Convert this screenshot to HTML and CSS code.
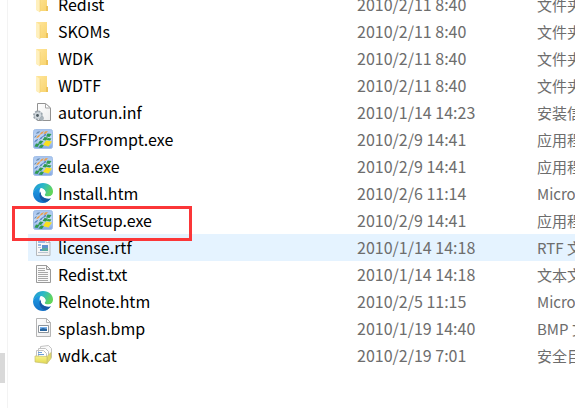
FILE: index.html
```html
<!DOCTYPE html>
<html lang="zh-CN">
<head>
<meta charset="utf-8">
<title>WDK</title>
<link rel="stylesheet" href="styles.css">
</head>
<body>
<svg class="sprite" aria-hidden="true">
  <defs>
    <linearGradient id="g-folder" x1="0" y1="0" x2="1" y2="1"><stop offset="0" stop-color="#ffe69c"/><stop offset="1" stop-color="#f8d36c"/></linearGradient>
    <linearGradient id="g-tile" x1="0" y1="0" x2="0" y2="1"><stop offset="0" stop-color="#a5c3ee"/><stop offset=".5" stop-color="#c9dcf6"/><stop offset="1" stop-color="#7fa5e4"/></linearGradient>
    <linearGradient id="g-page" x1="0" y1="0" x2="1" y2="1"><stop offset="0" stop-color="#fff"/><stop offset="1" stop-color="#ececec"/></linearGradient>
    <linearGradient id="g-edge-top" x1="0" y1="0" x2="1" y2=".4"><stop offset="0" stop-color="#1c8fd6"/><stop offset=".5" stop-color="#2cb8c8"/><stop offset="1" stop-color="#62d65c"/></linearGradient>
    <linearGradient id="g-edge-body" x1="0" y1="0" x2="0" y2="1"><stop offset="0" stop-color="#1f9de4"/><stop offset="1" stop-color="#1470c6"/></linearGradient>
    <linearGradient id="g-cat" x1="0" y1="0" x2="0" y2="1"><stop offset="0" stop-color="#f8f48c"/><stop offset="1" stop-color="#e2d850"/></linearGradient>
  </defs>
  <symbol id="folder" viewBox="0 0 20 20">
    <path fill="url(#g-folder)" d="M3 1h11v11h1v5H4z"/>
    <path fill="#edc35b" d="M13 12h2v5h-2z"/>
    <path fill="#fff0bd" d="M3 1l4 3v14.500L3 16z"/>
    <path fill="none" stroke="#eec865" stroke-width=".5" d="M7 4v14"/>
  </symbol>
  <symbol id="inf" viewBox="0 0 20 20">
    <path fill="url(#g-page)" stroke="#929292" d="M4.500 1.500h8l5 4.500v12.500h-13z"/>
    <path fill="#fff" stroke="#a5a5a5" d="M12.500 1.500V6h5z"/>
    <circle cx="5" cy="13.500" r="4" fill="#c5ccd2" stroke="#9ba5ad" stroke-width="2" stroke-dasharray="2 1.100"/>
    <circle cx="5" cy="13.500" r="3.200" fill="#d0d7dc"/>
    <circle cx="4.500" cy="13.500" r="1.400" fill="#4c5960"/>
    <path fill="#aab4bb" d="M7 15l3-1 1 2-1 3-3-1z"/>
  </symbol>
  <symbol id="exe" viewBox="0 0 20 20">
    <rect x=".5" y=".5" width="19" height="19" rx="2" fill="url(#g-tile)" stroke="#a3bfe8"/>
    <path fill="#6d8fb5" d="M4 3l3-1-1 2-3 1zM2 7l2-1-1 2-2 1z"/>
    <path fill="#ec9c45" d="M8 3.500l3-1.500-1.500 2.500-3 1.500zM12 2.500l3-.5-2 2.500-2.500.5zM4.500 7l3-2-1.500 3-3 1.500z"/>
    <path fill="#5a86c4" d="M7.500 8.500l3-2-1.500 3-3 1.500zM2.500 11l3-1.500-1.500 2.500-3 1.500zM11 5.500l2.500-1-1 2.500-2.500 1z"/>
    <path fill="#2f9a50" d="M14.500 4.500l4 .5-2 3-3.500-.5zM11.500 8l3.500.5-2 3-3.500-.5zM7 11.500l3.500.5-2.500 3-3-.5zM3 14.500l3.500.5-2 3-3-.5zM15 9l3.500.5-1.500 2-3.500-.5zM8 15.500l3 .5-2 3-3.500-.5z"/>
    <path fill="#f8df20" d="M13 11.500l6 1-3.500 5-5.500-1.500z"/>
  </symbol>
  <symbol id="edge" viewBox="0 0 20 20">
    <path fill="url(#g-edge-body)" d="M0 10C1 6 4 4 8 4.500c-2 2-2 5 0 7.500 2 3 6 4 10 2.500C16.500 18 13.500 20 10 20 4 20 0 15.500 0 10z"/>
    <path fill="#1558a6" d="M7.500 8.500c-2 3-1 8.500 4 10.500 3 0 5.500-2 7-4.500-5 2-10 .5-10.500-4z"/>
    <path fill="url(#g-edge-top)" d="M0 10C.5 4 4.500 0 10 0c6 0 10 4 10 8.500 0 3-2 5-5 5-2 0-3.500-.7-3.500-1.500 0-.6 1-1 1-2.500C12.500 7 10 5 7 5 3.500 5 1 7 0 10z"/>
    <path fill="#fff" d="M7.800 9.500c.2-1.800 1.500-2.800 2.900-2.700C12 7.500 12.500 8.500 12.500 9.500c0 1.500-1 1.900-1 2.500 0 .8 1.500 1.500 3.500 1.500 2 0 3.500-.7 4.600-2l.4 2-1.500 1.800C13.500 16.500 8.300 14.500 7.800 9.500z"/>
  </symbol>
  <symbol id="rtf" viewBox="0 0 20 20">
    <path fill="url(#g-page)" stroke="#b5b9bd" d="M3.500 1.500h9.500l4 4v13h-13.500z"/>
    <path fill="#fff" stroke="#b5b9bd" d="M13 1.500v4h4z"/>
    <path fill="#9bbbe2" d="M5 4h7v2H5zM5 7h3v2H5z"/>
    <path fill="#5c91cf" d="M9 8h6v3H9zM7 12h5v2H7z"/>
    <path fill="#58a99e" d="M9 11h6v3H9z"/>
    <path fill="#b9c4d0" d="M5 10h3v1H5zM5 15h10v1H5z"/>
  </symbol>
  <symbol id="txt" viewBox="0 0 20 20">
    <path fill="#fafafa" stroke="#9a9a9a" d="M3.500 1.500h10l4 4v13h-14z"/>
    <path fill="#eee" stroke="#9a9a9a" d="M13.500 1.500v4h4z"/>
    <path stroke="#a8a8a8" d="M5 4.500h7M5 6.500h7M5 8.500h10M5 10.500h10M5 12.500h10M5 14.500h10M5 16.500h10"/>
  </symbol>
  <symbol id="bmp" viewBox="0 0 20 20">
    <path fill="url(#g-page)" stroke="#b5b5b5" d="M3.500 .5h10l4 4v14h-14z"/>
    <path fill="#fff" stroke="#b5b5b5" d="M13.500 .5v4h4z"/>
    <path fill="#fff" stroke="#8d949b" d="M5.500 7.500h10v7h-10z"/>
    <path fill="#78b2ed" d="M7 9h7v4H7z"/>
    <path fill="#28649d" d="M7 11l3-1 4 1v2H7z"/>
  </symbol>
  <symbol id="cat" viewBox="0 0 20 20">
    <path fill="#fafafa" stroke="#c2c2c2" d="M7.500 1.500l8-1 3 3v9l-11 3z"/>
    <path fill="#fff" stroke="#c2c2c2" d="M5.500 3.500h7l3 3v7h-10zM3.500 5.500h7l3 3v6h-10z"/>
    <path stroke="#6b9fdc" d="M5 7.500h4M5 9.500h6"/>
    <path fill="#e3dc68" stroke="#c5bf70" stroke-width=".7" d="M14 11.500l4-4v6l-4 5z"/>
    <path fill="url(#g-cat)" stroke="#c5bf70" stroke-width=".7" d="M2 11l12 .5v7L2 17z"/>
  </symbol>
</svg>
<div class="window">
  <aside class="nav-edge"><div class="thumb"></div></aside>
  <main class="files">
    <table class="list">
      <colgroup><col class="col-name"><col class="col-date"><col></colgroup>
      <tbody>
        <tr><td><div class="name"><svg class="icon"><use href="#folder"/></svg>Redist</div></td><td>2010/2/11 8:40</td><td class="type">文件夹</td></tr>
        <tr><td><div class="name"><svg class="icon"><use href="#folder"/></svg>SKOMs</div></td><td>2010/2/11 8:40</td><td class="type">文件夹</td></tr>
        <tr><td><div class="name"><svg class="icon"><use href="#folder"/></svg>WDK</div></td><td>2010/2/11 8:40</td><td class="type">文件夹</td></tr>
        <tr><td><div class="name"><svg class="icon"><use href="#folder"/></svg>WDTF</div></td><td>2010/2/11 8:40</td><td class="type">文件夹</td></tr>
        <tr><td><div class="name"><svg class="icon"><use href="#inf"/></svg>autorun.inf</div></td><td>2010/1/14 14:23</td><td class="type">安装信息</td></tr>
        <tr><td><div class="name"><svg class="icon"><use href="#exe"/></svg>DSFPrompt.exe</div></td><td>2010/2/9 14:41</td><td class="type">应用程序</td></tr>
        <tr><td><div class="name"><svg class="icon"><use href="#exe"/></svg>eula.exe</div></td><td>2010/2/9 14:41</td><td class="type">应用程序</td></tr>
        <tr><td><div class="name"><svg class="icon"><use href="#edge"/></svg>Install.htm</div></td><td>2010/2/6 11:14</td><td class="type">Microsoft Edge</td></tr>
        <tr><td><div class="name marked"><svg class="icon"><use href="#exe"/></svg>KitSetup.exe</div></td><td>2010/2/9 14:41</td><td class="type">应用程序</td></tr>
        <tr class="hover"><td><div class="name"><svg class="icon"><use href="#rtf"/></svg>license.rtf</div></td><td>2010/1/14 14:18</td><td class="type">RTF 文件</td></tr>
        <tr><td><div class="name"><svg class="icon"><use href="#txt"/></svg>Redist.txt</div></td><td>2010/1/14 14:18</td><td class="type">文本文档</td></tr>
        <tr><td><div class="name"><svg class="icon"><use href="#edge"/></svg>Relnote.htm</div></td><td>2010/2/5 11:15</td><td class="type">Microsoft Edge</td></tr>
        <tr><td><div class="name"><svg class="icon"><use href="#bmp"/></svg>splash.bmp</div></td><td>2010/1/19 14:40</td><td class="type">BMP 文件</td></tr>
        <tr><td><div class="name"><svg class="icon"><use href="#cat"/></svg>wdk.cat</div></td><td>2010/2/19 7:01</td><td class="type">安全目录</td></tr>
      </tbody>
    </table>
  </main>
</div>
</body>
</html>
```
FILE: styles.css
```css
*, *::after { box-sizing: border-box; }
body {
  margin: 0;
  background: #fff;
  color: #000;
  font: 16px/27px "Noto Sans CJK SC", sans-serif;
}
.sprite { position: absolute; width: 0; height: 0; }
.window {
  display: flex;
  height: 100vh;
  overflow: hidden;
}
.nav-edge {
  display: flex;
  flex: none;
  flex-direction: column;
  justify-content: flex-end;
  width: 8px;
  padding-bottom: 25px;
  border-right: 1px solid #f3f3f3;
}
.thumb {
  width: 5px;
  height: 30px;
  background: #d9d9d9;
}
.files {
  flex: 1;
  min-width: 0;
  padding-left: 20px;
}
/* The list is scrolled a third of a row down. */
.list {
  width: 100%;
  margin-top: -9px;
  border-collapse: collapse;
  table-layout: fixed;
}
.col-name { width: 329px; }
.col-date { width: 180px; }
td {
  height: 27px;
  padding: 0;
  overflow: hidden;
  white-space: nowrap;
  color: #6d6d6d;
}
td:first-child {
  overflow: visible;
  color: #000;
}
.type { font-size: 15px; }
.name {
  display: flex;
  align-items: center;
  gap: 5px;
  padding-left: 5px;
}
.icon {
  flex: none;
  width: 20px;
  height: 20px;
  margin-bottom: 1px;
}
.hover { background: #e5f3ff; }
.marked { position: relative; }
.marked::after {
  content: "";
  position: absolute;
  z-index: 1;
  top: -1px;
  left: -16px;
  width: 180px;
  height: 35px;
  border: 3px solid #fb3638;
}
```
